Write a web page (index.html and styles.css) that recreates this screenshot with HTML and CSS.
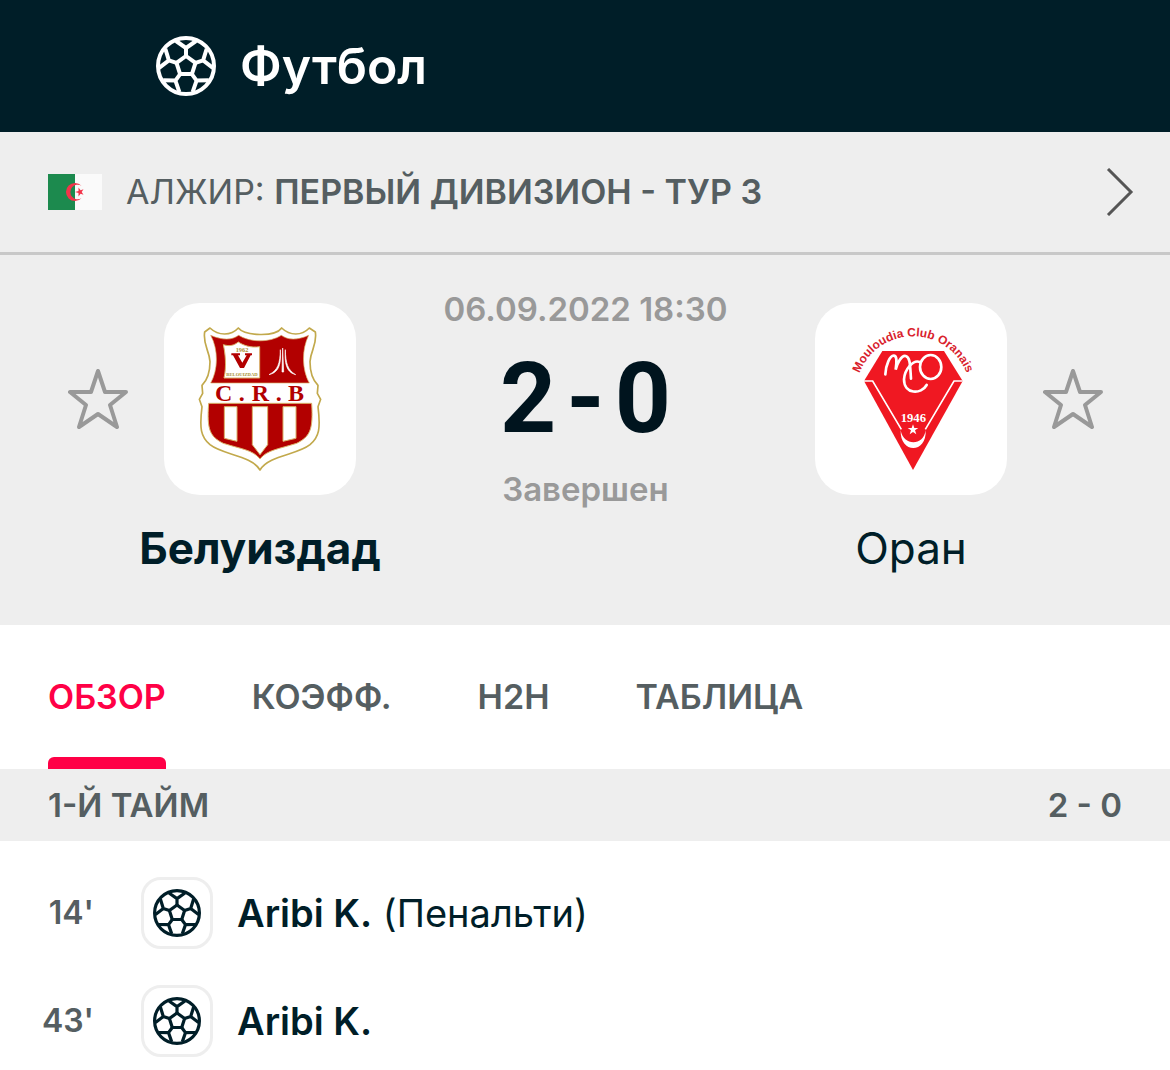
FILE: index.html
```html
<!DOCTYPE html>
<html lang="ru">
    <head>
        <meta charset="UTF-8" />
        <meta name="viewport" content="width=device-width, initial-scale=1.0" />
        <title>Белуиздад - Оран</title>
        <link rel="stylesheet" href="styles.css">
    </head>
    <body>
        <svg class="sprite" aria-hidden="true">
            <symbol id="ball" viewBox="-30 -30 60 60">
                <g fill="none" stroke="currentColor" stroke-width="4" stroke-linejoin="round">
                    <circle r="28" />
                    <path d="M0-10L9.500-3.100L5.900 8.100H-5.900L-9.500-3.100Z" />
                    <g id="seam"><path d="M0-10V-18M-10-25L0-18L10-25" /></g>
                    <use href="#seam" transform="rotate(72)" />
                    <use href="#seam" transform="rotate(144)" />
                    <use href="#seam" transform="rotate(216)" />
                    <use href="#seam" transform="rotate(288)" />
                </g>
            </symbol>
            <symbol id="star" viewBox="0 0 60 60">
                <path d="M30 2L37 23H58L42 36L49 58L30 45L11 58L18 36L2 23H23Z" fill="none" stroke="currentColor" stroke-width="4" stroke-linejoin="round" />
            </symbol>
        </svg>

        <header class="header">
            <svg class="header-icon"><use href="#ball" /></svg>
            <h1>Футбол</h1>
        </header>

        <a class="league" href="#">
            <svg class="flag" viewBox="0 0 54 36">
                <rect width="54" height="36" fill="#fafafa" />
                <rect width="27" height="36" fill="#1c8a4e" />
                <path d="M33.500 11.800A9 9 0 1 0 33.500 24.200A7.300 7.300 0 1 1 33.500 11.800Z" fill="#f3344a" />
                <path d="M27 18L30.500 16.900V13.500L32.600 16.300L35.500 15.300L33.700 18L35.500 20.700L32.600 19.700L30.500 22.500V19.100Z" fill="#f3344a" />
            </svg>
            <span class="league-name">АЛЖИР: <b>ПЕРВЫЙ ДИВИЗИОН - ТУР 3</b></span>
            <svg class="chevron" viewBox="0 0 28 48"><path d="M2 1L25 24L2 47" fill="none" stroke="#555" stroke-width="3" /></svg>
        </a>

        <section class="match">
            <button type="button" class="favorite" aria-label="Белуиздад"><svg><use href="#star" /></svg></button>
            <div class="team">
                <svg class="logo" viewBox="12 9 576 576">
                    <path d="M150 84C175 108 213 108 235 84C255 108 345 112 365 84C390 108 425 108 448 84L466 96C472 135 452 150 450 185C450 220 458 240 474 256L472 280L482 298L474 320C482 385 478 410 450 434C412 465 326 466 300 510C274 466 188 465 150 434C122 410 118 385 126 320L118 298L128 280L126 256C142 240 150 220 150 185C148 150 128 135 134 96Z" fill="#fff" stroke="#c2a94c" stroke-width="5" stroke-linejoin="round" />
                    <path d="M152 106C190 122 217 120 236 106C270 128 330 128 364 106C383 120 410 122 446 106C424 150 426 210 448 249H152C174 210 176 150 152 106Z" fill="#b20000" stroke="#d9b26a" stroke-width="2" />
                    <path d="M190 134C210 140 222 136 235 126C250 136 272 144 299 140V234H192C200 200 196 160 190 134Z" fill="#fff" stroke="#d9b26a" stroke-width="3" />
                    <text x="246" y="156" font-family="Liberation Serif" font-weight="bold" font-size="19" text-anchor="middle" fill="#a98f30">1962</text>
                    <path d="M214 160H240V166H234L247 188L260 166H255V160H276V166H272L252 204H240L219 166H214Z" fill="#b20000" />
                    <text x="246" y="227" font-family="Liberation Serif" font-weight="bold" font-size="14" text-anchor="middle" fill="#a98f30">BELOUIZDAD</text>
                    <path d="M361 149C360 190 354 210 327 224C352 218 365 200 361 149ZM368 144L366 216H371ZM376 149C377 190 383 210 407 224C385 218 372 200 376 149Z" fill="#fff" stroke="#fff" stroke-width="2" />
                    <text x="191 245 301 356 408" y="303" font-family="Liberation Serif" font-weight="bold" font-size="72" text-anchor="middle" fill="#b20000">C.R.B</text>
                    <path d="M146 310H455C460 390 450 410 410 430C360 446 320 450 300 477C280 450 240 446 190 430C150 410 140 390 146 310Z" fill="#b20000" stroke="#d9b26a" stroke-width="3" />
                    <path d="M193 320H231V424L193 415ZM277 320H323V434L300 464L277 434ZM369 320H408V415L369 424Z" fill="#fff" stroke="#d9b26a" stroke-width="3" />
                </svg>
                <span class="team-name winner">Белуиздад</span>
            </div>
            <div class="result">
                <time class="muted" datetime="2022-09-06T18:30">06.09.2022 18:30</time>
                <div class="score"><span>2</span><span>-</span><span>0</span></div>
                <span class="muted">Завершен</span>
            </div>
            <div class="team">
                <svg class="logo" viewBox="15 9 576 576">
                    <path id="arc" d="M146 226A172 172 0 0 1 472 226" fill="none" />
                    <text font-family="Liberation Sans" font-weight="bold" font-size="36" text-anchor="middle" fill="#d9222c"><textPath href="#arc" startOffset="50%">Mouloudia Club Oranais</textPath></text>
                    <path d="M217 153H402L458 243L309 510L162 243Z" fill="#f01822" />
                    <g fill="none" stroke="#fff">
                        <path d="M162 243L188 243L274 388M458 243L432 243L346 388" stroke-width="5" />
                        <path d="M226 223C227 196 240 165 252 167C264 169 258 196 257 209C261 192 274 165 287 168C301 172 300 195 303 236" stroke-width="8" stroke-linecap="round" />
                        <path d="M329 186C310 178 284 208 282 238C282 284 334 284 350 255" stroke-width="8" stroke-linecap="round" />
                        <ellipse cx="362" cy="201" rx="32" ry="36" stroke-width="8" />
                    </g>
                    <text x="310" y="367" font-family="Liberation Serif" font-weight="bold" font-size="38" text-anchor="middle" fill="#fff">1946</text>
                    <path d="M309 373L313 384H325L315 391L319 403L309 396L299 403L303 391L293 384H305Z" fill="#fff" />
                    <path d="M272 390C269 462 351 462 347 390C342 438 280 440 272 390Z" fill="#fff" />
                </svg>
                <span class="team-name">Оран</span>
            </div>
            <button type="button" class="favorite" aria-label="Оран"><svg><use href="#star" /></svg></button>
        </section>

        <nav class="tabs">
            <a class="active" href="#">ОБЗОР</a>
            <a href="#">КОЭФФ.</a>
            <a href="#">H2H</a>
            <a href="#">ТАБЛИЦА</a>
        </nav>

        <section>
            <h2 class="period"><span>1-Й ТАЙМ</span><span>2 - 0</span></h2>
            <ul class="events">
                <li>
                    <span class="minute">14'</span>
                    <span class="event-icon"><svg><use href="#ball" /></svg></span>
                    <span><b>Aribi K.</b> (Пенальти)</span>
                </li>
                <li>
                    <span class="minute">43'</span>
                    <span class="event-icon"><svg><use href="#ball" /></svg></span>
                    <span><b>Aribi K.</b></span>
                </li>
            </ul>
        </section>
    </body>
</html>
```
FILE: styles.css
```css
* {
    margin: 0;
    padding: 0;
    box-sizing: border-box;
}
body {
    background-color: #fff;
    color: #001e28;
    font-family: Inter, Roboto, sans-serif;
    font-size: 32px;
    line-height: 40px;
}
a {
    color: inherit;
    text-decoration: none;
}
b {
    font-weight: 600;
}
svg {
    display: block;
}
.sprite {
    width: 0;
    height: 0;
    position: absolute;
}
.header {
    display: flex;
    align-items: center;
    gap: 24px;
    height: 132px;
    padding: 0 156px;
    background-color: #001e28;
    color: #fff;
}
.header-icon {
    width: 60px;
    height: 60px;
}
.header h1 {
    font-size: 50px;
    font-weight: 600;
}
.league {
    display: flex;
    align-items: center;
    gap: 24px;
    padding: 36px;
    padding-left: 48px;
    border-bottom: 3px solid #c8c8c8;
    background-color: #eee;
    color: #555e61;
    font-size: 34px;
}
.flag {
    width: 54px;
    height: 36px;
}
.league-name {
    flex: 1;
}
.chevron {
    width: 28px;
    height: 48px;
}
.match {
    display: grid;
    grid-template-columns: 60px 192px 1fr 192px 60px;
    gap: 36px;
    padding: 34px 67px 48px 68px;
    background-color: #eee;
}
.favorite {
    align-self: start;
    margin-top: 80px;
    border: none;
    background: none;
    color: #999;
    cursor: pointer;
}
.favorite svg {
    width: 60px;
    height: 60px;
}
.team {
    display: flex;
    flex-direction: column;
    align-items: center;
    gap: 24px;
    padding-top: 14px;
}
.logo {
    width: 192px;
    height: 192px;
    border-radius: 36px;
    background-color: #fff;
}
.team-name {
    font-size: 44px;
    line-height: 58px;
}
.winner {
    font-weight: 700;
}
.result {
    display: flex;
    flex-direction: column;
    align-items: center;
    gap: 20px;
    white-space: nowrap;
}
.muted {
    color: #999;
    font-size: 33px;
    font-weight: 600;
}
.score {
    display: flex;
    gap: 10px;
    color: #00141e;
    font-family: Roboto, sans-serif;
    font-size: 98px;
    font-weight: 700;
    line-height: 100px;
}
.tabs {
    display: flex;
    gap: 86px;
    padding: 0 48px;
    color: #555e61;
    font-size: 34px;
    font-weight: 600;
}
.tabs a {
    height: 144px;
    padding-top: 52px;
}
.tabs .active {
    display: flex;
    flex-direction: column;
    justify-content: space-between;
    color: #ff0046;
}
.tabs .active::after {
    content: "";
    height: 12px;
    border-radius: 6px 6px 0 0;
    background-color: #ff0046;
}
.period {
    display: flex;
    justify-content: space-between;
    padding: 16px 48px;
    background-color: #eee;
    color: #555e61;
    font-size: 33px;
    font-weight: 600;
}
.events {
    display: flex;
    flex-direction: column;
    gap: 36px;
    padding: 36px 24px 0;
    list-style: none;
    font-size: 38px;
}
.events li {
    display: flex;
    align-items: center;
    gap: 24px;
}
.minute {
    width: 70px;
    margin-right: 23px;
    color: #555e61;
    font-size: 32px;
    font-weight: 600;
    text-align: right;
}
.event-icon {
    padding: 9px;
    border: 3px solid #eee;
    border-radius: 20px;
}
.event-icon svg {
    width: 48px;
    height: 48px;
}
```
